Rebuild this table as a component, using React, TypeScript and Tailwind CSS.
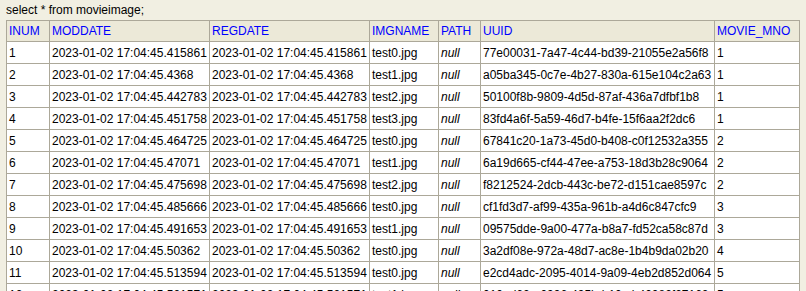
import React from "react";

const rows = [
  ["1", "415861", "test0.jpg", "77e00031-7a47-4c44-bd39-21055e2a56f8", "1"],
  ["2", "4368", "test1.jpg", "a05ba345-0c7e-4b27-830a-615e104c2a63", "1"],
  ["3", "442783", "test2.jpg", "50100f8b-9809-4d5d-87af-436a7dfbf1b8", "1"],
  ["4", "451758", "test3.jpg", "83fd4a6f-5a59-46d7-b4fe-15f6aa2f2dc6", "1"],
  ["5", "464725", "test0.jpg", "67841c20-1a73-45d0-b408-c0f12532a355", "2"],
  ["6", "47071", "test1.jpg", "6a19d665-cf44-47ee-a753-18d3b28c9064", "2"],
  ["7", "475698", "test2.jpg", "f8212524-2dcb-443c-be72-d151cae8597c", "2"],
  ["8", "485666", "test0.jpg", "cf1fd3d7-af99-435a-961b-a4d6c847cfc9", "3"],
  ["9", "491653", "test1.jpg", "09575dde-9a00-477a-b8a7-fd52ca58c87d", "3"],
  ["10", "50362", "test0.jpg", "3a2df08e-972a-48d7-ac8e-1b4b9da02b20", "4"],
  ["11", "513594", "test0.jpg", "e2cd4adc-2095-4014-9a09-4eb2d852d064", "5"],
  ["12", "521571", "test1.jpg", "010ad62e-0996-495b-b10c-b40082f27162", "5"],
];

const headers = ["INUM", "MODDATE", "REGDATE", "IMGNAME", "PATH", "UUID", "MOVIE_MNO"];
const widths = ["w-[43px]", "w-[160px]", "w-[160px]", "w-[69px]", "w-[42px]", "w-[234px]", "w-[85px]"];

export default function App() {
  return (
    <div className="min-h-[291px] bg-[#f1efe2] pl-[6px] text-[12px] text-black font-['Liberation_Sans',Arial,sans-serif]">
      <div className="pt-[3px] pb-[3px] leading-[14px]">select * from movieimage;</div>
      <table className="w-[794px] table-fixed border-collapse">
        <colgroup>
          {widths.map((w, i) => (
            <col key={i} className={w} />
          ))}
        </colgroup>
        <thead>
          <tr className="bg-[#ece9d8]">
            {headers.map((h) => (
              <th
                key={h}
                className="h-[21px] border border-[#aca899] px-[2px] py-0 text-left font-normal leading-[14px] text-[#0000ff]"
              >
                {h}
              </th>
            ))}
          </tr>
        </thead>
        <tbody className="bg-white">
          {rows.map((r) => (
            <tr key={r[0]}>
              <td className="h-[22px] border border-[#aca899] px-[2px] py-0 leading-[14px] whitespace-nowrap">{r[0]}</td>
              <td className="border border-[#aca899] px-[2px] py-0 leading-[14px] whitespace-nowrap">2023-01-02 17:04:45.{r[1]}</td>
              <td className="border border-[#aca899] px-[2px] py-0 leading-[14px] whitespace-nowrap">2023-01-02 17:04:45.{r[1]}</td>
              <td className="border border-[#aca899] px-[2px] py-0 leading-[14px] whitespace-nowrap">{r[2]}</td>
              <td className="border border-[#aca899] px-[2px] py-0 leading-[14px] italic whitespace-nowrap">null</td>
              <td className="border border-[#aca899] px-[2px] py-0 leading-[14px] whitespace-nowrap">{r[3]}</td>
              <td className="border border-[#aca899] px-[2px] py-0 leading-[14px] whitespace-nowrap">{r[4]}</td>
            </tr>
          ))}
        </tbody>
      </table>
    </div>
  );
}
